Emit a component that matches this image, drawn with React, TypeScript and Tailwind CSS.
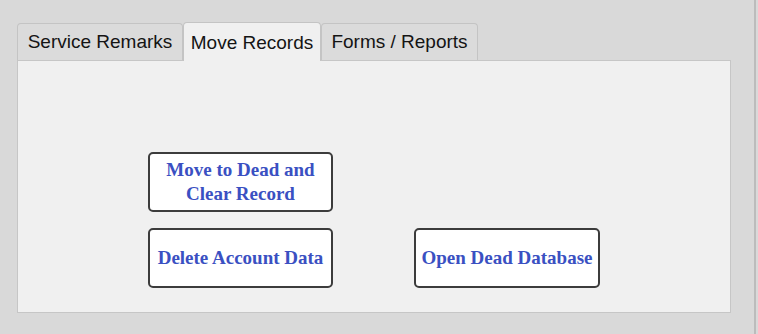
import React, { useState } from 'react';

const TABS = [
  { label: 'Service Remarks', width: 'w-[166px]' },
  { label: 'Move Records', width: 'w-[138px]' },
  { label: 'Forms / Reports', width: 'w-[157px]' },
];

function ActionButton({ children, className = '' }: { children: React.ReactNode; className?: string }) {
  return (
    <button
      className={`flex h-[60px] items-center justify-center rounded-[5px] border-2 border-[#3c3c3c] bg-white text-center font-['Liberation_Serif',serif] text-[19px] font-bold leading-[24px] text-[#3a50c2] ${className}`}
    >
      {children}
    </button>
  );
}

export default function App() {
  const [active, setActive] = useState(1);

  return (
    <div className="h-[334px] w-[758px] overflow-hidden bg-[#d9d9d9] font-['Liberation_Sans',Arial,sans-serif]">
      <div className="h-full w-[756px] border-r-2 border-[#bcbcbc] pl-[17px] pt-[23px]">
        {/* Tabs */}
        <div className="flex h-[37px] items-end">
          {TABS.map((tab, i) =>
            i === active ? (
              <button
                key={tab.label}
                onClick={() => setActive(i)}
                className={`relative z-10 -mb-px flex h-[39px] items-center justify-center rounded-t-[4px] border border-b-0 border-[#c4c4c4] bg-[#f0f0f0] pt-[2px] text-[19px] text-[#141414] ${tab.width}`}
              >
                {tab.label}
              </button>
            ) : (
              <button
                key={tab.label}
                onClick={() => setActive(i)}
                className={`flex h-[37px] items-center justify-center rounded-t-[4px] border border-b-0 border-[#c4c4c4] bg-[#dbdbdb] text-[19px] text-[#141414] ${tab.width}`}
              >
                {tab.label}
              </button>
            )
          )}
        </div>

        {/* Panel */}
        <div className="h-[253px] w-[714px] border border-[#c6c6c6] bg-[#f0f0f0] pl-[130px] pt-[91px]">
          <div className="flex items-end">
            <div className="flex flex-col gap-[16px]">
              <ActionButton className="w-[185px]">
                Move to Dead and
                <br />
                Clear Record
              </ActionButton>
              <ActionButton className="w-[185px] whitespace-nowrap">Delete Account Data</ActionButton>
            </div>
            <ActionButton className="ml-[81px] w-[186px] whitespace-nowrap">Open Dead Database</ActionButton>
          </div>
        </div>
      </div>
    </div>
  );
}
